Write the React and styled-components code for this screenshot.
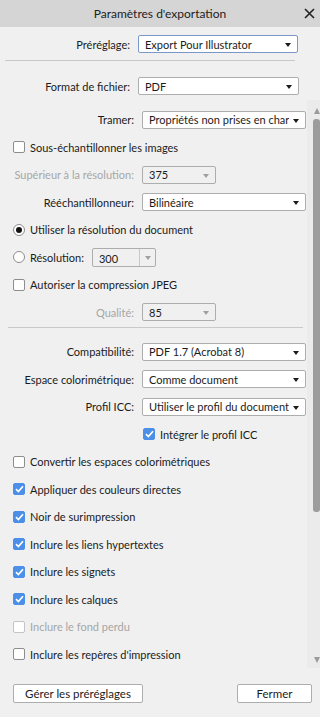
import React from 'react'
import styled, { createGlobalStyle } from 'styled-components'

const GlobalStyle = createGlobalStyle`
  html, body {
    margin: 0;
    padding: 0;
    background: #f0f0f0;
  }
  * { box-sizing: border-box; }
`

const Dialog = styled.div`
  width: 320px;
  height: 717px;
  display: flex;
  flex-direction: column;
  background: #f0f0f0;
  font-family: Lato, "Noto Sans", sans-serif;
  font-size: 11px;
  color: #1b1b1b;
  overflow: hidden;
`

const TitleBar = styled.div`
  height: 27px;
  flex: none;
  display: flex;
  align-items: center;
  justify-content: center;
  position: relative;
  background: #d5d5d5;
  font-size: 12px;
  color: #222;
`

const CloseButton = styled.div`
  position: absolute;
  right: 5px;
  top: 8px;
  width: 11px;
  height: 11px;
  display: flex;
`

const Top = styled.div`
  flex: none;
  display: flex;
  flex-direction: column;
  padding-top: 8px;
`

const Separator = styled.div`
  height: 1px;
  background: #c9c9c9;
  margin: ${p => p.$margin || '0'};
`

const FieldRow = styled.div`
  height: ${p => p.$h || 27.8}px;
  display: flex;
  align-items: center;
`

const Label = styled.div`
  width: ${p => p.$w || 142}px;
  padding-right: 8px;
  text-align: right;
  white-space: nowrap;
  flex: none;
  color: ${p => (p.$muted ? '#a6a6a6' : '#1b1b1b')};
`

const SelectBox = styled.div`
  width: ${p => p.$w}px;
  height: 18px;
  flex: none;
  display: flex;
  align-items: center;
  padding: 0 16px 0 6px;
  position: relative;
  border: 1px solid ${p => (p.$focus ? '#7b97c9' : '#adadad')};
  border-radius: 2px;
  background: ${p => (p.$disabled ? '#f0f0f0' : '#ffffff')};
`

const SelectText = styled.span`
  flex: 1;
  white-space: nowrap;
  overflow: hidden;
`

const Arrow = styled.span`
  position: absolute;
  right: 6px;
  top: 7px;
  width: 0;
  height: 0;
  border-left: 3.5px solid transparent;
  border-right: 3.5px solid transparent;
  border-top: 4px solid ${p => (p.$muted ? '#a0a0a0' : '#1b1b1b')};
`

const ComboBox = styled.div`
  width: 64px;
  height: 19px;
  margin-left: 3px;
  display: flex;
  border: 1px solid #adadad;
  border-radius: 2px;
  background: #f0f0f0;
`

const ComboValue = styled.div`
  flex: 1;
  display: flex;
  align-items: center;
  padding-left: 6px;
  padding-top: 2px;
`

const ComboButton = styled.div`
  width: 16px;
  border-left: 1px solid #c8c8c8;
  position: relative;
`

const ScrollArea = styled.div`
  flex: 1;
  display: flex;
  min-height: 0;
  margin-top: 5px;
`

const ScrollContent = styled.div`
  flex: 1;
  display: flex;
  flex-direction: column;
  padding-top: 6px;
  overflow: hidden;
`

const Track = styled.div`
  width: 13px;
  flex: none;
  display: flex;
  flex-direction: column;
  align-items: flex-end;
  background: #ebebeb;
  padding-top: 3px;
`

const TrackArrow = styled.div`
  height: 16px;
  width: 13px;
  display: flex;
  align-items: center;
  justify-content: center;
  padding-left: 6px;
`

const Tri = styled.span`
  width: 0;
  height: 0;
  border-left: 3.5px solid transparent;
  border-right: 3.5px solid transparent;
  ${p => (p.$up ? 'border-bottom: 6px solid #9b9b9b;' : 'border-top: 6px solid #9b9b9b;')}
`

const Thumb = styled.div`
  width: 7px;
  height: 393px;
  background: #9c9c9c;
  border-radius: 3px;
`

const Spacer = styled.div`
  flex: 1;
`

const CheckRow = styled.label`
  height: ${p => p.$h || 27.8}px;
  display: flex;
  align-items: center;
  gap: 5px;
  padding-left: ${p => p.$indent || 13}px;
  color: ${p => (p.$disabled ? '#a6a6a6' : '#1b1b1b')};
`

const Box = styled.span`
  width: 12px;
  height: 12px;
  flex: none;
  border-radius: 2px;
  display: flex;
  align-items: center;
  justify-content: center;
  border: 1px solid ${p => (p.$checked ? '#4b8fe8' : p.$disabled ? '#c4c4c4' : '#8d8d8d')};
  background: ${p => (p.$checked ? '#4b8fe8' : '#ffffff')};
`

const Radio = styled.span`
  width: 12px;
  height: 12px;
  flex: none;
  border-radius: 50%;
  border: 1px solid #8d8d8d;
  background: #fff;
  display: flex;
  align-items: center;
  justify-content: center;
  &::after {
    content: '';
    width: 6px;
    height: 6px;
    border-radius: 50%;
    background: ${p => (p.$checked ? '#111' : 'transparent')};
  }
`

const Footer = styled.div`
  height: 49px;
  flex: none;
  display: flex;
  align-items: center;
  justify-content: space-between;
  padding: 2px 8px 0 13px;
`

const Button = styled.div`
  height: 19px;
  width: ${p => p.$w}px;
  border: 1px solid #adadad;
  border-radius: 2px;
  background: #fff;
  display: flex;
  align-items: center;
  justify-content: center;
  font-size: 11.5px;
`

const Select = ({ value, w = 164, disabled, focus }) => (
  <SelectBox $w={w} $disabled={disabled} $focus={focus}>
    <SelectText>{value}</SelectText>
    <Arrow $muted={disabled} />
  </SelectBox>
)

const Check = ({ children, checked, disabled, indent }) => (
  <CheckRow $disabled={disabled} $indent={indent}>
    <Box $checked={checked} $disabled={disabled}>
      {checked && (
        <svg width="9" height="8" viewBox="0 0 9 8">
          <path d="M1 4.2 L3.4 6.6 L8 1.2" stroke="#fff" strokeWidth="1.7" fill="none" />
        </svg>
      )}
    </Box>
    {children}
  </CheckRow>
)

const App = () => (
  <Dialog>
    <GlobalStyle />
    <TitleBar>
      Paramètres d'exportation
      <CloseButton>
        <svg width="11" height="11" viewBox="0 0 11 11">
          <path d="M1 1 L10 10 M10 1 L1 10" stroke="#222" strokeWidth="1.6" />
        </svg>
      </CloseButton>
    </TitleBar>

    <Top>
      <FieldRow $h={18}>
        <Label $w={138}>Préréglage:</Label>
        <Select value="Export Pour Illustrator" w={160} focus />
      </FieldRow>
      <Separator $margin="7px 25px 0 5px" />
      <FieldRow $h={18} style={{ marginTop: 16 }}>
        <Label $w={138}>Format de fichier:</Label>
        <Select value="PDF" w={161} />
      </FieldRow>
    </Top>

    <ScrollArea>
      <ScrollContent>
        <FieldRow>
          <Label>Tramer:</Label>
          <Select value="Propriétés non prises en charge" />
        </FieldRow>
        <Check>Sous-échantillonner les images</Check>
        <FieldRow>
          <Label $muted>Supérieur à la résolution:</Label>
          <Select value="375" w={74} disabled />
        </FieldRow>
        <FieldRow>
          <Label>Rééchantillonneur:</Label>
          <Select value="Bilinéaire" />
        </FieldRow>
        <CheckRow>
          <Radio $checked />
          Utiliser la résolution du document
        </CheckRow>
        <CheckRow>
          <Radio />
          Résolution:
          <ComboBox>
            <ComboValue>300</ComboValue>
            <ComboButton>
              <Arrow $muted style={{ right: 4 }} />
            </ComboButton>
          </ComboBox>
        </CheckRow>
        <Check>Autoriser la compression JPEG</Check>
        <FieldRow>
          <Label $muted>Qualité:</Label>
          <Select value="85" w={74} disabled />
        </FieldRow>
        <Separator $margin="1px 4px 10px 8px" />
        <FieldRow>
          <Label>Compatibilité:</Label>
          <Select value="PDF 1.7 (Acrobat 8)" />
        </FieldRow>
        <FieldRow>
          <Label>Espace colorimétrique:</Label>
          <Select value="Comme document" />
        </FieldRow>
        <FieldRow>
          <Label>Profil ICC:</Label>
          <Select value="Utiliser le profil du document" />
        </FieldRow>
        <Check checked indent={143}>Intégrer le profil ICC</Check>
        <Check>Convertir les espaces colorimétriques</Check>
        <Check checked>Appliquer des couleurs directes</Check>
        <Check checked>Noir de surimpression</Check>
        <Check checked>Inclure les liens hypertextes</Check>
        <Check checked>Inclure les signets</Check>
        <Check checked>Inclure les calques</Check>
        <Check disabled>Inclure le fond perdu</Check>
        <Check>Inclure les repères d'impression</Check>
      </ScrollContent>
      <Track>
        <TrackArrow><Tri $up /></TrackArrow>
        <Thumb />
        <Spacer />
        <TrackArrow><Tri /></TrackArrow>
      </Track>
    </ScrollArea>

    <Footer>
      <Button $w={130}>Gérer les préréglages</Button>
      <Button $w={75}>Fermer</Button>
    </Footer>
  </Dialog>
)

export default App
